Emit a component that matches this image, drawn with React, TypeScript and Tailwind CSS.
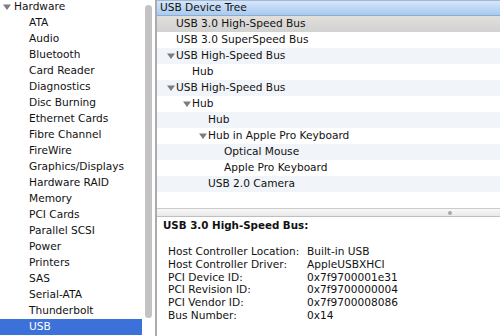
const sidebarItems = [
  'ATA', 'Audio', 'Bluetooth', 'Card Reader', 'Diagnostics', 'Disc Burning', 'Ethernet Cards',
  'Fibre Channel', 'FireWire', 'Graphics/Displays', 'Hardware RAID', 'Memory', 'PCI Cards',
  'Parallel SCSI', 'Power', 'Printers', 'SAS', 'Serial-ATA', 'Thunderbolt', 'USB'
]

const tree: Array<{ label: string; level: number; open?: boolean }> = [
  { label: 'USB 3.0 High-Speed Bus', level: 0 },
  { label: 'USB 3.0 SuperSpeed Bus', level: 0 },
  { label: 'USB High-Speed Bus', level: 0, open: true },
  { label: 'Hub', level: 1 },
  { label: 'USB High-Speed Bus', level: 0, open: true },
  { label: 'Hub', level: 1, open: true },
  { label: 'Hub', level: 2 },
  { label: 'Hub in Apple Pro Keyboard', level: 2, open: true },
  { label: 'Optical Mouse', level: 3 },
  { label: 'Apple Pro Keyboard', level: 3 },
  { label: 'USB 2.0 Camera', level: 2 },
  { label: '', level: 0 },
]

const details = [
  ['Host Controller Location:', 'Built-in USB'],
  ['Host Controller Driver:', 'AppleUSBXHCI'],
  ['PCI Device ID:', '0x7f9700001e31'],
  ['PCI Revision ID:', '0x7f9700000004'],
  ['PCI Vendor ID:', '0x7f9700008086'],
  ['Bus Number:', '0x14'],
]

const indents = ['pl-[19px]', 'pl-[35px]', 'pl-[51px]', 'pl-[67px]']

function Disclosure() {
  return (
    <svg width="8" height="6" viewBox="0 0 8 6" className="shrink-0 mr-[1px]">
      <path d="M0 0.5 H8 L4 6 Z" fill="#7d7d7d" />
    </svg>
  )
}

export default function App() {
  return (
    <div className="w-[500px] h-[336px] flex bg-white overflow-hidden text-[10.6px] text-[#111] font-['DejaVu_Sans',sans-serif]">
      {/* sidebar */}
      <aside className="w-[155px] flex shrink-0">
        <div className="w-[142px] flex flex-col -mt-[1px]">
          <div className="h-[16px] flex items-center pl-[3px]">
            <Disclosure />
            <span className="ml-[2px]">Hardware</span>
          </div>
          {sidebarItems.map((item) => (
            <div key={item}
              className={item === 'USB'
                ? 'h-[16px] flex items-center pl-[29px] bg-[#3b71d9] text-white'
                : 'h-[16px] flex items-center pl-[29px]'}>
              {item}
            </div>
          ))}
        </div>
        <div className="w-[13px] pt-[5px] pl-[3px]">
          <div className="w-[7px] h-[313px] rounded-full bg-[#c3c3c3]" />
        </div>
      </aside>
      <div className="w-[2px] shrink-0 bg-[#ababab]" />

      {/* right pane */}
      <main className="flex-1 flex flex-col min-w-0">
        <div className="h-[16px] flex items-center pl-[3px] border-t border-b border-t-[#9fb8d6] border-b-[#8fabd0] bg-gradient-to-b from-[#d6e6f7] to-[#a8caf0]">
          USB Device Tree
        </div>
        {tree.map((row, i) => (
          <div key={i}
            className={[
              'h-[16px] flex items-center',
              i === 0 ? 'bg-gradient-to-b from-[#e2dfdb] to-[#d2d2d2]' : i % 2 === 0 ? 'bg-[#f1f5fa]' : 'bg-white',
              indents[row.level],
            ].join(' ')}>
            {row.open && <span className="-ml-[9px] flex"><Disclosure /></span>}
            {row.label}
          </div>
        ))}
        <div className="h-[9px] relative border-t border-b border-t-[#cbcbcb] border-b-[#bfbfbf] bg-gradient-to-b from-[#f7f7f7] to-[#e9e9e9]">
          <div className="absolute left-[291px] top-[2px] w-[4px] h-[4px] rounded-full bg-[#a9a9a9]" />
        </div>
        <div className="pl-[6px] pt-[1px]">
          <div className="h-[16px] flex items-center font-bold text-[10.3px]">USB 3.0 High-Speed Bus:</div>
          <div className="mt-[12px] pl-[5px] flex flex-col">
            {details.map(([k, v]) => (
              <div key={k} className="h-[12.7px] flex items-center">
                <span className="w-[139px] shrink-0">{k}</span>
                <span>{v}</span>
              </div>
            ))}
          </div>
        </div>
      </main>
    </div>
  )
}
